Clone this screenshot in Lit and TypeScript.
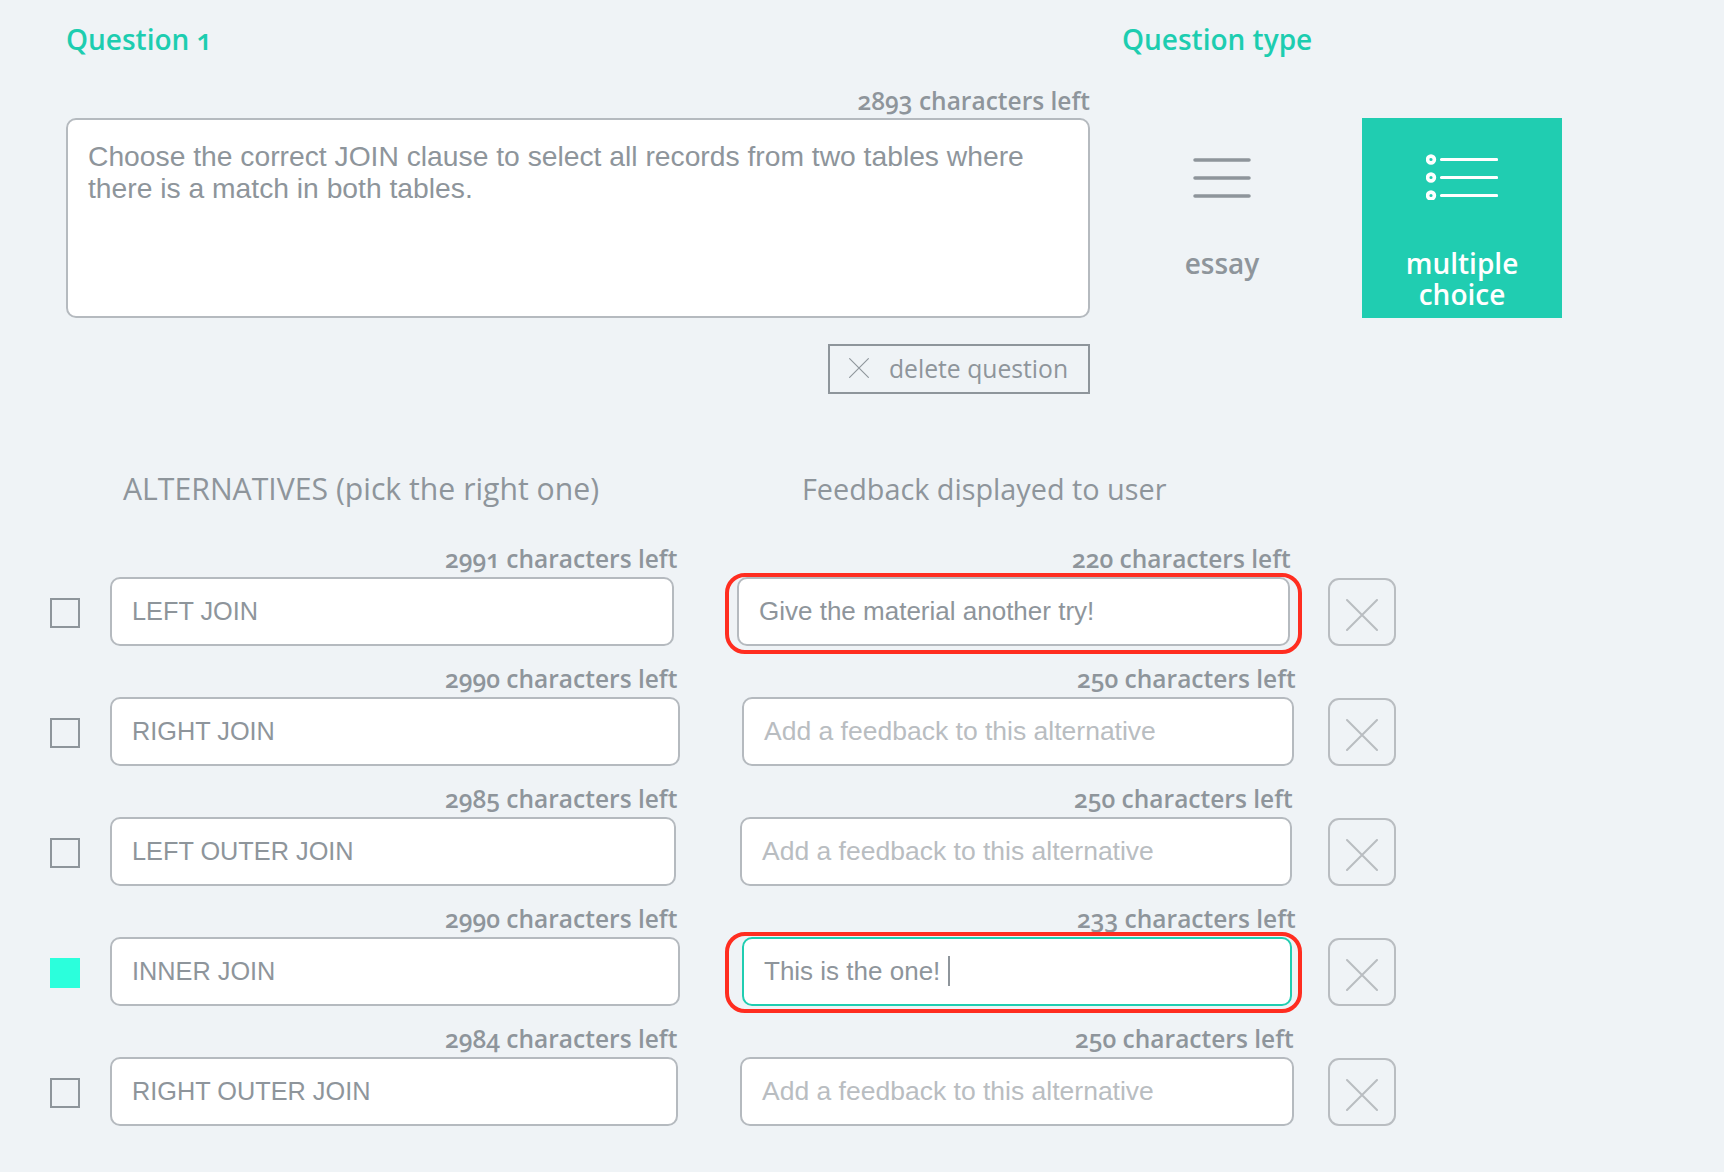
import { LitElement, html, css, svg } from "lit";
import { customElement } from "lit/decorators.js";
import { classMap } from "lit/directives/class-map.js";

interface Row {
  alt: string; altCount: number; altW: number; checked?: boolean;
  fb: string; fbCount: number; fbLeft: number; fbW: number; fbLabel: number;
  ring?: "a" | "b"; focus?: boolean; placeholder?: boolean;
}

const PH = "Add a feedback to this alternative";
const ROWS: Row[] = [
  { alt: "LEFT JOIN", altCount: 2991, altW: 564, fb: "Give the material another try!", fbCount: 220, fbLeft: 7, fbW: 553, fbLabel: 342, ring: "a" },
  { alt: "RIGHT JOIN", altCount: 2990, altW: 570, fb: PH, fbCount: 250, fbLeft: 12, fbW: 552, fbLabel: 347, placeholder: true },
  { alt: "LEFT OUTER JOIN", altCount: 2985, altW: 566, fb: PH, fbCount: 250, fbLeft: 10, fbW: 552, fbLabel: 344, placeholder: true },
  { alt: "INNER JOIN", altCount: 2990, altW: 570, checked: true, fb: "This is the one!", fbCount: 233, fbLeft: 12, fbW: 550, fbLabel: 347, ring: "b", focus: true },
  { alt: "RIGHT OUTER JOIN", altCount: 2984, altW: 568, fb: PH, fbCount: 250, fbLeft: 10, fbW: 554, fbLabel: 345, placeholder: true },
];

const cross = (size: number, sw: number) => html`<svg class="x" width=${size} height=${size} viewBox="0 0 32 32" fill="none" stroke="currentColor" stroke-width=${sw} stroke-linecap="round">${svg`<path d="M1 1 L31 31 M31 1 L1 31"/>`}</svg>`;

@customElement("app-root")
export class AppRoot extends LitElement {
  static styles = css`
    :host { display: block; width: 1724px; min-height: 1172px; background: #eff3f6; color: #8e959b; font-family: "Open Sans", sans-serif; overflow: hidden; }
    .page { padding: 23px 0 0 0; }
    .top { display: flex; padding-left: 66px; gap: 32px; }
    .left { width: 1024px; display: flex; flex-direction: column; }
    .title { font-size: 28px; line-height: 32px; font-weight: 600; color: #1dcdb0; font-feature-settings: "onum"; font-variant-numeric: oldstyle-nums; }
    .left .title { margin-bottom: 32px; }
    .count { font-size: 24.5px; line-height: 28px; font-weight: 600; white-space: nowrap; font-feature-settings: "onum"; font-variant-numeric: oldstyle-nums; margin-bottom: 4px; }
    .left .count { text-align: right; margin-bottom: 3px; }
    .area { box-sizing: border-box; height: 200px; background: #fff; border: 2px solid #b5babf; border-radius: 10px; padding: 20px 20px; font: 28.25px/32px "Liberation Sans", sans-serif; }
    .del { align-self: flex-end; box-sizing: border-box; width: 262px; height: 50px; margin-top: 26px; border: 2px solid #8e959b; display: flex; align-items: center; padding: 0 0 2px 19px; gap: 20px; font-size: 24.7px; }
    .right { width: 440px; }
    .right .title { margin-bottom: 63px; }
    .types { display: flex; gap: 40px; }
    .type { box-sizing: border-box; width: 200px; height: 200px; padding-top: 40px; display: flex; flex-direction: column; align-items: center; font-size: 28px; line-height: 31px; font-weight: 600; text-align: center; }
    .type.on { background: #20cdb1; color: #fff; }
    .type svg { display: block; margin-bottom: 50px; }
    .type.on svg { margin: -4px 0 48px; }
    .heads { display: flex; margin-top: 77px; font-size: 28.8px; line-height: 36px; }
    .heads .h1 { margin-left: 123px; width: 679px; font-size: 30.2px; }
    .rows { display: flex; flex-direction: column; gap: 19px; margin-top: 38px; padding-left: 50px; }
    .row { display: flex; align-items: flex-end; height: 101px; }
    .check { box-sizing: border-box; width: 30px; height: 30px; border: 2px solid #8e959b; margin: 0 30px 18px 0; flex: none; }
    .check.on { background: #2bffdc; border: 0; }
    .alt { width: 620px; flex: none; }
    .alt .count { padding-left: 335px; }
    .fb { width: 598px; flex: none; }
    .input { box-sizing: border-box; height: 69px; background: #fff; border: 2px solid #b5babf; border-radius: 10px; padding: 0 20px 2px; display: flex; align-items: center; font: 25.3px/30px "Liberation Sans", sans-serif; position: relative; white-space: nowrap; }
    .fb .input { font-size: 26px; }
    .fb .input.ph { color: #b9bdc1; font-size: 26.5px; }
    .input.focus { border-color: #20cdb1; }
    .caret { display: inline-block; width: 2px; height: 30px; background: #8e959b; margin-left: 8px; }
    .ring { position: absolute; border: 4px solid #ff2d20; border-radius: 20px; box-sizing: border-box; pointer-events: none; }
    .ring.a { left: -14px; right: -14px; top: -6px; bottom: -10px; }
    .ring.b { left: -19px; right: -12px; top: -7px; bottom: -9px; }
    .rm { box-sizing: border-box; width: 68px; height: 68px; padding-top: 5px; border: 2px solid #b9bdc1; border-radius: 11px; color: #b9bdc1; display: flex; align-items: center; justify-content: center; flex: none; }
    .x { display: block; }
  `;

  private renderRow(r: Row) {
    return html`<div class="row">
      <div class=${classMap({ check: true, on: !!r.checked })}></div>
      <div class="alt">
        <div class="count">${r.altCount} characters left</div>
        <div class="input" style="width:${r.altW}px">${r.alt}</div>
      </div>
      <div class="fb">
        <div class="count" style="padding-left:${r.fbLabel}px">${r.fbCount} characters left</div>
        <div class=${classMap({ input: true, ph: !!r.placeholder, focus: !!r.focus })} style="margin-left:${r.fbLeft}px;width:${r.fbW}px">
          ${r.fb}${r.focus ? html`<span class="caret"></span>` : ""}
          ${r.ring ? html`<div class="ring ${r.ring}"></div>` : ""}
        </div>
      </div>
      <div class="rm">${cross(32, 2)}</div>
    </div>`;
  }

  render() {
    return html`<div class="page">
      <div class="top">
        <div class="left">
          <div class="title">Question 1</div>
          <div class="count">2893 characters left</div>
          <div class="area">Choose the correct JOIN clause to select all records from two tables where<br />there is a match in both tables.</div>
          <div class="del">${cross(20, 1.8)}<span>delete question</span></div>
        </div>
        <div class="right">
          <div class="title">Question type</div>
          <div class="types">
            <div class="type">
              <svg width="58" height="40" viewBox="0 0 58 40" stroke="#8e959b" stroke-width="3.5" stroke-linecap="round"><path d="M2 2H56M2 20H56M2 38H56"/></svg>
              essay
            </div>
            <div class="type on">
              <svg width="72" height="46" viewBox="0 0 72 46" fill="none" stroke="#fff" stroke-linecap="round"><g stroke-width="3.2"><path d="M15.5 5.5H70.5M15.5 23.5H70.5M15.5 41.5H70.5"/></g><g stroke-width="3.6"><circle cx="5" cy="5.5" r="3.4"/><circle cx="5" cy="23.5" r="3.4"/><circle cx="5" cy="41.5" r="3.4"/></g></svg>
              multiple<br />choice
            </div>
          </div>
        </div>
      </div>
      <div class="heads"><div class="h1">ALTERNATIVES (pick the right one)</div><div>Feedback displayed to user</div></div>
      <div class="rows">${ROWS.map((r) => this.renderRow(r))}</div>
    </div>`;
  }
}
